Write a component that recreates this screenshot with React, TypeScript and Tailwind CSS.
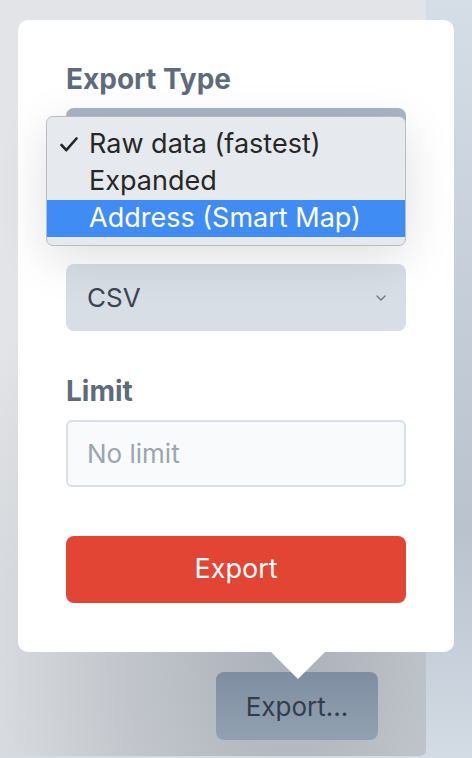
import { ReactNode } from 'react'

function Field({ label, children }: { label?: string; children: ReactNode }) {
  return (
    <div className="flex flex-col">
      {/* the second label sits under the open menu, so only its space is kept */}
      <label className="h-[32px] text-[28px] leading-[32px] font-bold text-[#5f6b7b] mb-[13px]">{label}</label>
      {children}
    </div>
  )
}

function Chevron() {
  return (
    <svg width="10" height="6" viewBox="0 0 10 6" fill="none" className="mr-[20px]">
      <path d="M1 1l4 4 4-4" stroke="#6b7480" strokeWidth="1.3" strokeLinecap="round" strokeLinejoin="round" />
    </svg>
  )
}

const options = ['Raw data (fastest)', 'Expanded', 'Address (Smart Map)']

export default function App() {
  const selected = 0
  const highlighted = 2

  return (
    <div
      className="relative w-[472px] h-[758px] overflow-hidden flex bg-[linear-gradient(to_bottom,#d5dde7,#b9c2cd_70%,#d3dbe5)]"
      style={{ fontFamily: 'Inter, "Noto Sans", sans-serif' }}
    >
      <div className="w-[426px] h-[756px] rounded-br-[6px] flex flex-col justify-end items-start pl-[216px] pb-[16px] bg-[radial-gradient(ellipse_95%_75%_at_68%_86%,#aab0b9_0%,#c1c5cb_40%,#e2e4e7_88%)]">
        <button className="w-[162px] h-[68px] rounded-[8px] bg-[linear-gradient(to_bottom,#7f8da0,#92a1b2)] text-[26px] text-[#323d49]">
          Export...
        </button>
      </div>

      {/* popover */}
      <div className="absolute left-[18px] top-[20px] w-[436px] h-[632px] rounded-[10px] bg-white px-[48px] pt-[43px] flex flex-col gap-[44px]">
        <Field label="Export Type">
          <div className="h-[67px] rounded-[8px] bg-[#a9b5c4]" />
        </Field>
        <Field>
          <div className="h-[67px] rounded-[8px] bg-[#d7dee6] flex items-center justify-between pl-[21px] text-[26px] text-[#3a4452]">
            CSV
            <Chevron />
          </div>
        </Field>
        <Field label="Limit">
          <div className="h-[67px] rounded-[6px] bg-[#f8fafc] border-2 border-[#d8dfe7] flex items-center pl-[19px] text-[26px] text-[#9ba4b0]">
            No limit
          </div>
        </Field>
        <button className="h-[67px] mt-[5px] rounded-[8px] bg-[#e34535] text-white text-[27px]">
          Export
        </button>

        {/* native select menu */}
        <div className="absolute left-[28px] top-[96px] w-[360px] h-[130px] rounded-[7px] bg-[#e6e9ed] border border-[#b9bdc3] shadow-[0_12px_48px_rgba(0,0,0,0.13)] pt-[9px] flex flex-col">
          {options.map((opt, i) => (
            <div
              key={opt}
              className={`h-[37px] flex items-center text-[27px] ${i === highlighted ? 'bg-[#3f8cf4] text-white' : 'text-[#272727]'}`}
            >
              <span className="w-[42px] flex justify-center pl-[2px]">
                {i === selected && (
                  <svg width="18" height="15" viewBox="0 0 18 15" fill="none">
                    <path d="M1.5 8l4.8 5.2L16.5 1.5" stroke="#272727" strokeWidth="2.6" strokeLinecap="round" strokeLinejoin="round" />
                  </svg>
                )}
              </span>
              {opt}
            </div>
          ))}
        </div>
      </div>

      {/* popover arrow */}
      <svg className="absolute left-[270px] top-[651px]" width="56" height="29" viewBox="0 0 56 29">
        <path d="M0 0h56L28 28z" fill="white" />
      </svg>
    </div>
  )
}
